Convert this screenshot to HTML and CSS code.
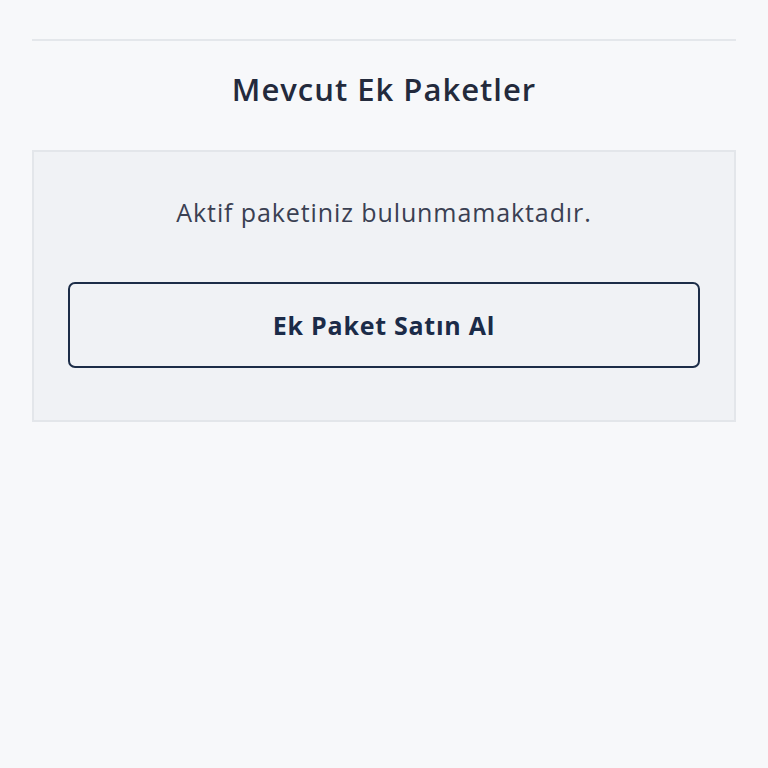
FILE: index.html
```html
<!DOCTYPE html>
<html lang="tr">
<head>
<meta charset="utf-8">
<link rel="stylesheet" href="styles.css">
</head>
<body>
<div class="page">
  <hr class="divider">
  <h2 class="title">Mevcut Ek Paketler</h2>
  <div class="card">
    <p class="empty">Aktif paketiniz bulunmamaktadır.</p>
    <button class="buy">Ek Paket Satın Al</button>
  </div>
</div>
</body>
</html>
```
FILE: styles.css
```css
html, body {
  margin: 0;
  padding: 0;
  background: #f7f8fa;
  font-family: "Open Sans", "Noto Sans", sans-serif;
}
.page {
  padding: 39px 32px 0;
  display: flex;
  flex-direction: column;
}
.divider {
  margin: 0;
  border: 0;
  height: 2px;
  background: #e4e7eb;
}
.title {
  margin: 28px 0 0;
  height: 40px;
  line-height: 40px;
  text-align: center;
  font-size: 31px;
  font-weight: 600;
  letter-spacing: 1px;
  color: #232a3c;
}
.card {
  margin-top: 41px;
  border: 2px solid #e3e6ea;
  background: #f0f2f5;
  padding: 41px 34px 52px;
  display: flex;
  flex-direction: column;
  align-items: stretch;
}
.empty {
  margin: 0;
  text-align: center;
  font-size: 25px;
  line-height: 38px;
  letter-spacing: 0.9px;
  color: #3a4052;
}
.buy {
  margin-top: 51px;
  height: 86px;
  border: 2px solid #1c2d48;
  border-radius: 7px;
  background: transparent;
  font-family: inherit;
  font-size: 25px;
  font-weight: 700;
  letter-spacing: 0.75px;
  color: #1b2b48;
}
```
